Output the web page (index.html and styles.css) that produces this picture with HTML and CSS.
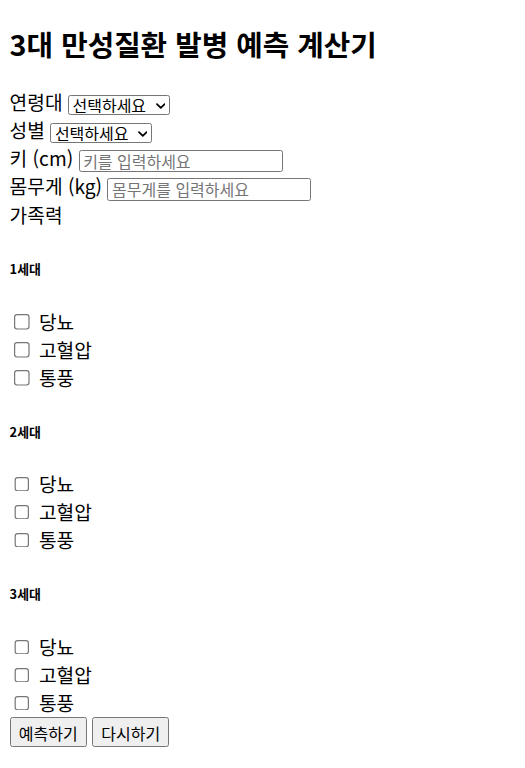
FILE: index.html
```html
<!DOCTYPE html>
<html lang="ko">
<head>
<meta charset="utf-8">
<title>3대 만성질환 발병 예측 계산기</title>
<link rel="stylesheet" href="styles.css">
</head>
<body>
<section class="page">
<h1 class="title">3대 만성질환 발병 예측 계산기</h1>
<form class="form">
  <label class="label">연령대</label> <span class="selwrap"><select class="field sel"><option>선택하세요</option></select><svg class="chev" viewBox="0 0 10 6" aria-hidden="true"><path d="M1 1l4 4 4-4" fill="none" stroke="#000" stroke-width="1.8" stroke-linecap="round" stroke-linejoin="round"/></svg></span><br>
  <label class="label">성별</label> <span class="selwrap"><select class="field sel"><option>선택하세요</option></select><svg class="chev" viewBox="0 0 10 6" aria-hidden="true"><path d="M1 1l4 4 4-4" fill="none" stroke="#000" stroke-width="1.8" stroke-linecap="round" stroke-linejoin="round"/></svg></span><br>
  <label class="label">키 (cm)</label> <input class="field text" type="text" placeholder="키를 입력하세요"><br>
  <label class="label">몸무게 (kg)</label> <input class="field text" type="text" placeholder="몸무게를 입력하세요"><br>
  <label class="label">가족력</label><br>
  <h6 class="gen">1세대</h6>
  <input class="check" type="checkbox"> 당뇨<br>
  <input class="check" type="checkbox"> 고혈압<br>
  <input class="check" type="checkbox"> 통풍<br>
  <h6 class="gen">2세대</h6>
  <input class="check" type="checkbox"> 당뇨<br>
  <input class="check" type="checkbox"> 고혈압<br>
  <input class="check" type="checkbox"> 통풍<br>
  <h6 class="gen">3세대</h6>
  <input class="check" type="checkbox"> 당뇨<br>
  <input class="check" type="checkbox"> 고혈압<br>
  <input class="check" type="checkbox"> 통풍<br>
  <button class="btn" type="button">예측하기</button> <button class="btn" type="button">다시하기</button>
</form>
</section>
</body>
</html>
```

FILE: styles.css
```css
html {
  zoom: 1.2;
}
body {
  margin: 8px;
  font-family: "Noto Sans CJK KR", sans-serif;
  font-size: 16px;
  color: #000;
  background: #fff;
}
.title {
  font-size: 1.5em;
  font-weight: 700;
  margin: 11.5px 0 19.9px;
}
.field, .btn {
  font-family: "Noto Sans CJK KR", sans-serif;
  font-size: 13.33px;
  color: #000;
}
.selwrap {
  position: relative;
  display: inline-block;
  line-height: 0;
  vertical-align: middle;
}
.sel {
  appearance: none;
  -webkit-appearance: none;
  box-sizing: border-box;
  width: 85px;
  height: 16.5px;
  margin: 0;
  padding: 0 16px 0 3px;
  border: 1px solid #767676;
  border-radius: 2px;
  background: #fff;
  line-height: 14px;
  vertical-align: top;
}
.chev {
  position: absolute;
  right: 4px;
  top: 6.5px;
  width: 8px;
  height: 5px;
  pointer-events: none;
}
.text {
  box-sizing: border-box;
  width: 170px;
  height: 19px;
  padding: 0 3px;
  border: 1px solid #767676;
  border-radius: 2px;
  line-height: 15px;
  vertical-align: middle;
}
.text::placeholder {
  color: #757575;
}
.gen {
  font-size: 0.67em;
  font-weight: 700;
  margin: 2.33em 0;
}
.check {
  margin: 3px 3px 3px 4px;
}
.btn {
  box-sizing: border-box;
  height: 25px;
  padding: 1px 6px;
}
```
